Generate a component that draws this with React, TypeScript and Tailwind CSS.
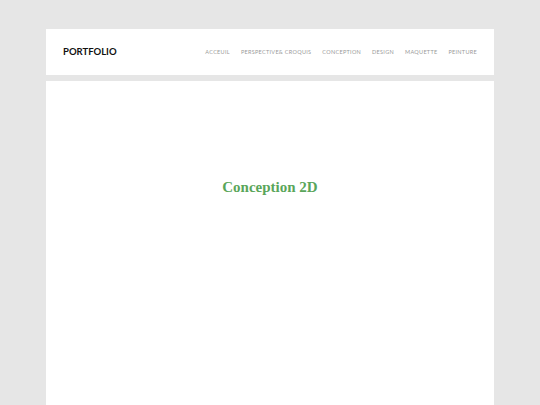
export default function App() {
  const nav = ['ACCEUIL', 'PERSPECTIVE& CROQUIS', 'CONCEPTION', 'DESIGN', 'MAQUETTE', 'PEINTURE'];
  return (
    <div className="min-h-screen bg-[#e6e6e6] px-[46px] pt-[29px]" style={{ fontFamily: 'Lato, sans-serif' }}>
      <header className="bg-white h-[46px] flex items-center justify-between pl-[17px] pr-[17px]">
        <div className="text-[9.5px] font-bold text-[#111] pt-px">PORTFOLIO</div>
        <nav className="flex gap-[11px]">
          {nav.map(n => (
            <span key={n} className="text-[5.5px] tracking-[0.3px] text-[#9a9a9a]">{n}</span>
          ))}
        </nav>
      </header>
      <main className="bg-white mt-[6px] h-[330px] flex justify-center pt-[99px]">
        <h1 className="text-[15px] font-bold text-[#5aa65a] leading-none h-fit" style={{ fontFamily: '"Liberation Serif", serif' }}>
          Conception 2D
        </h1>
      </main>
    </div>
  );
}
